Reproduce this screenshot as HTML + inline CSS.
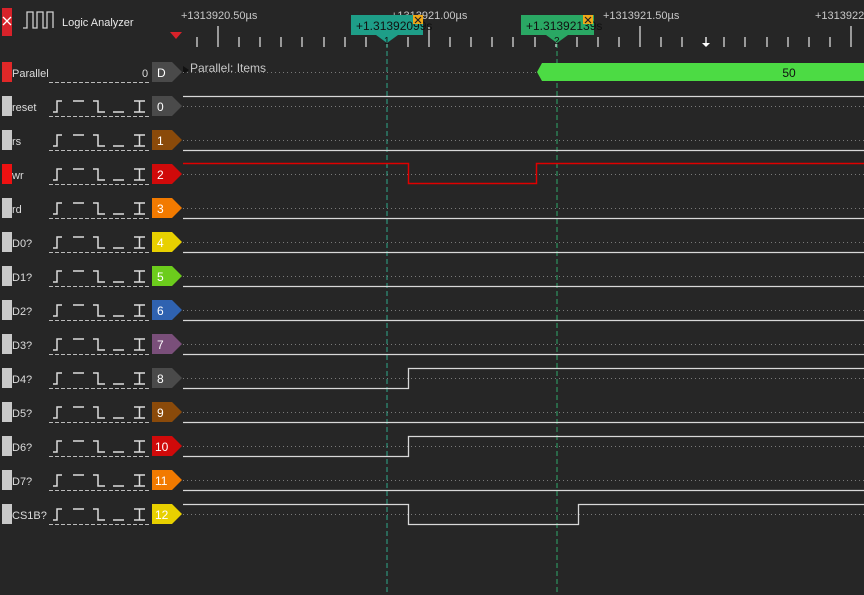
<!DOCTYPE html>
<html><head><meta charset="utf-8"><style>
html,body{margin:0;padding:0;background:#262626;width:864px;height:595px;overflow:hidden}
svg{display:block}
text{font-family:"Liberation Sans","DejaVu Sans",sans-serif}
</style></head><body>
<svg width="864" height="595" viewBox="0 0 864 595" xmlns="http://www.w3.org/2000/svg">
<defs>
<g id="gl" fill="none" stroke="#dcdcdc" stroke-width="1.5">
<path d="M53 6H57V-5H62"/><path d="M73 -5H84"/><path d="M93 -5H98V6H105"/><path d="M113 6H124"/><path d="M134 -5H145M134 6H145M139.5 -5V6"/>
<path d="M49 10.5H149" stroke="#bbb" stroke-width="1" stroke-dasharray="4,2"/>
</g>
<path id="tag" d="M152 -10H172L182 0L172 10H152Z"/>
<path id="dot" d="M183 0.5H864" stroke="#7a7a7a" stroke-width="1" stroke-dasharray="1,3"/>
</defs>
<rect width="864" height="595" fill="#262626"/>
<rect x="2" y="8" width="10" height="28" fill="#d8222a"/>
<path d="M3 17L11 25M11 17L3 25" stroke="#fff" stroke-width="1.3"/>
<path d="M23 28H27V12H33V28H37V12H43V28H47V12H53V28" fill="none" stroke="#d0d0d0" stroke-width="1.3"/>
<text x="62" y="26" font-size="11" fill="#e8e8e8">Logic Analyzer</text>
<path d="M170 32L182 32L176 39Z" fill="#d8222a"/>
<g font-size="11" fill="#c8c8c8">
<text x="181" y="19">+1313920.50µs</text>
<text x="391" y="19">+1313921.00µs</text>
<text x="603" y="19">+1313921.50µs</text>
<text x="815" y="19">+1313922</text>
</g>
<g stroke="#d8d8d8" stroke-width="1.3">
<path d="M197 37V47M218 26V47M239 37V47M260 37V47M281 37V47M302 37V47M324 37V47M345 37V47M366 37V47M387 37V47M408 37V47M429 26V47M450 37V47M471 37V47M492 37V47M513 37V47M535 37V47M556 37V47M577 37V47M598 37V47M619 37V47M640 26V47M661 37V47M682 37V47M724 37V47M745 37V47M767 37V47M788 37V47M809 37V47M830 37V47M851 26V47"/>
</g>
<path d="M706 37V45" stroke="#fff" stroke-width="1.3"/><path d="M702 43H710L706 47Z" fill="#fff"/>
<path d="M387 43V595" stroke="#2fa88a" stroke-width="1" stroke-dasharray="5,3"/>
<path d="M557 43V595" stroke="#2fa86a" stroke-width="1" stroke-dasharray="5,3"/>
<rect x="351" y="15" width="72" height="20" fill="#1e9e88"/>
<path d="M376 35H398L387 43Z" fill="#1e9e88"/>
<text x="356" y="30" font-size="12" style="fill:#111">+1.31392099s</text>
<text x="384" y="44" font-size="10" style="fill:#111">1</text>
<rect x="413" y="15" width="10" height="9" fill="#f0a818"/><path d="M415 17L421 23M421 17L415 23" stroke="#222" stroke-width="1.2"/>
<rect x="521" y="15" width="73" height="20" fill="#2aa864"/>
<path d="M546 35H568L557 43Z" fill="#2aa864"/>
<text x="526" y="30" font-size="12" style="fill:#111">+1.31392139s</text>
<text x="554" y="44" font-size="10" style="fill:#111">2</text>
<rect x="583" y="15" width="10" height="9" fill="#f0a818"/><path d="M585 17L591 23M591 17L585 23" stroke="#222" stroke-width="1.2"/>
<rect x="2" y="62" width="10" height="20" fill="#e02828"/>
<text x="12" y="77" font-size="11" fill="#dcdcdc">Parallel</text>
<text x="142" y="77" font-size="11" fill="#dcdcdc">0</text>
<path d="M49 82.5H149" stroke="#bbb" stroke-dasharray="4,2"/>
<use href="#tag" y="72" fill="#4a4a4a"/>
<text x="157" y="77" font-size="12" fill="#fff">D</text>
<path d="M183 66L189 70L183 74Z" fill="#111"/>
<use href="#dot" y="72"/>
<text x="190" y="72" font-size="12" fill="#c8c8c8">Parallel: Items</text>
<path d="M537 72L542 63H864V81H542Z" fill="#4cdb44"/>
<text x="789" y="77" font-size="12" fill="#111" text-anchor="middle">50</text>
<g font-size="11" fill="#dcdcdc">
<rect x="2" y="96" width="10" height="20" fill="#c8c8c8"/><text x="12" y="111">reset</text><use href="#gl" y="106"/><use href="#tag" y="106" fill="#4a4a4a"/><text x="157" y="111" font-size="12" fill="#fff">0</text><use href="#dot" y="106"/>
<rect x="2" y="130" width="10" height="20" fill="#c8c8c8"/><text x="12" y="145">rs</text><use href="#gl" y="140"/><use href="#tag" y="140" fill="#8a4a0a"/><text x="157" y="145" font-size="12" fill="#fff">1</text><use href="#dot" y="140"/>
<rect x="2" y="164" width="10" height="20" fill="#ee1111"/><text x="12" y="179">wr</text><use href="#gl" y="174"/><use href="#tag" y="174" fill="#d00a0a"/><text x="157" y="179" font-size="12" fill="#fff">2</text><use href="#dot" y="174"/>
<rect x="2" y="198" width="10" height="20" fill="#c8c8c8"/><text x="12" y="213">rd</text><use href="#gl" y="208"/><use href="#tag" y="208" fill="#f27a00"/><text x="157" y="213" font-size="12" fill="#fff">3</text><use href="#dot" y="208"/>
<rect x="2" y="232" width="10" height="20" fill="#c8c8c8"/><text x="12" y="247">D0?</text><use href="#gl" y="242"/><use href="#tag" y="242" fill="#e8d000"/><text x="157" y="247" font-size="12" fill="#fff">4</text><use href="#dot" y="242"/>
<rect x="2" y="266" width="10" height="20" fill="#c8c8c8"/><text x="12" y="281">D1?</text><use href="#gl" y="276"/><use href="#tag" y="276" fill="#6ccc1c"/><text x="157" y="281" font-size="12" fill="#fff">5</text><use href="#dot" y="276"/>
<rect x="2" y="300" width="10" height="20" fill="#c8c8c8"/><text x="12" y="315">D2?</text><use href="#gl" y="310"/><use href="#tag" y="310" fill="#2f62b0"/><text x="157" y="315" font-size="12" fill="#fff">6</text><use href="#dot" y="310"/>
<rect x="2" y="334" width="10" height="20" fill="#c8c8c8"/><text x="12" y="349">D3?</text><use href="#gl" y="344"/><use href="#tag" y="344" fill="#7a4f7a"/><text x="157" y="349" font-size="12" fill="#fff">7</text><use href="#dot" y="344"/>
<rect x="2" y="368" width="10" height="20" fill="#c8c8c8"/><text x="12" y="383">D4?</text><use href="#gl" y="378"/><use href="#tag" y="378" fill="#4a4a4a"/><text x="157" y="383" font-size="12" fill="#fff">8</text><use href="#dot" y="378"/>
<rect x="2" y="402" width="10" height="20" fill="#c8c8c8"/><text x="12" y="417">D5?</text><use href="#gl" y="412"/><use href="#tag" y="412" fill="#8a4a0a"/><text x="157" y="417" font-size="12" fill="#fff">9</text><use href="#dot" y="412"/>
<rect x="2" y="436" width="10" height="20" fill="#c8c8c8"/><text x="12" y="451">D6?</text><use href="#gl" y="446"/><use href="#tag" y="446" fill="#d00a0a"/><text x="155" y="451" font-size="12" fill="#fff">10</text><use href="#dot" y="446"/>
<rect x="2" y="470" width="10" height="20" fill="#c8c8c8"/><text x="12" y="485">D7?</text><use href="#gl" y="480"/><use href="#tag" y="480" fill="#f27a00"/><text x="155" y="485" font-size="12" fill="#fff">11</text><use href="#dot" y="480"/>
<rect x="2" y="504" width="10" height="20" fill="#c8c8c8"/><text x="12" y="519">CS1B?</text><use href="#gl" y="514"/><use href="#tag" y="514" fill="#e8d000"/><text x="155" y="519" font-size="12" fill="#fff">12</text><use href="#dot" y="514"/>
</g>
<g fill="none" stroke="#d8d8d8" stroke-width="1.3">
<path d="M183 96.5H864"/>
<path d="M183 150.5H864"/>
<path d="M183 218.5H864"/>
<path d="M183 252.5H864"/>
<path d="M183 286.5H864"/>
<path d="M183 320.5H864"/>
<path d="M183 354.5H864"/>
<path d="M183 388.5H408.5V368.5H864"/>
<path d="M183 422.5H864"/>
<path d="M183 456.5H408.5V436.5H864"/>
<path d="M183 490.5H864"/>
<path d="M183 504.5H408.5V524.5H578.5V504.5H864"/>
</g>
<path d="M183 163.5H408.5V183.5H536.5V163.5H864" fill="none" stroke="#e00000" stroke-width="1.5"/>
</svg>
</body></html>
